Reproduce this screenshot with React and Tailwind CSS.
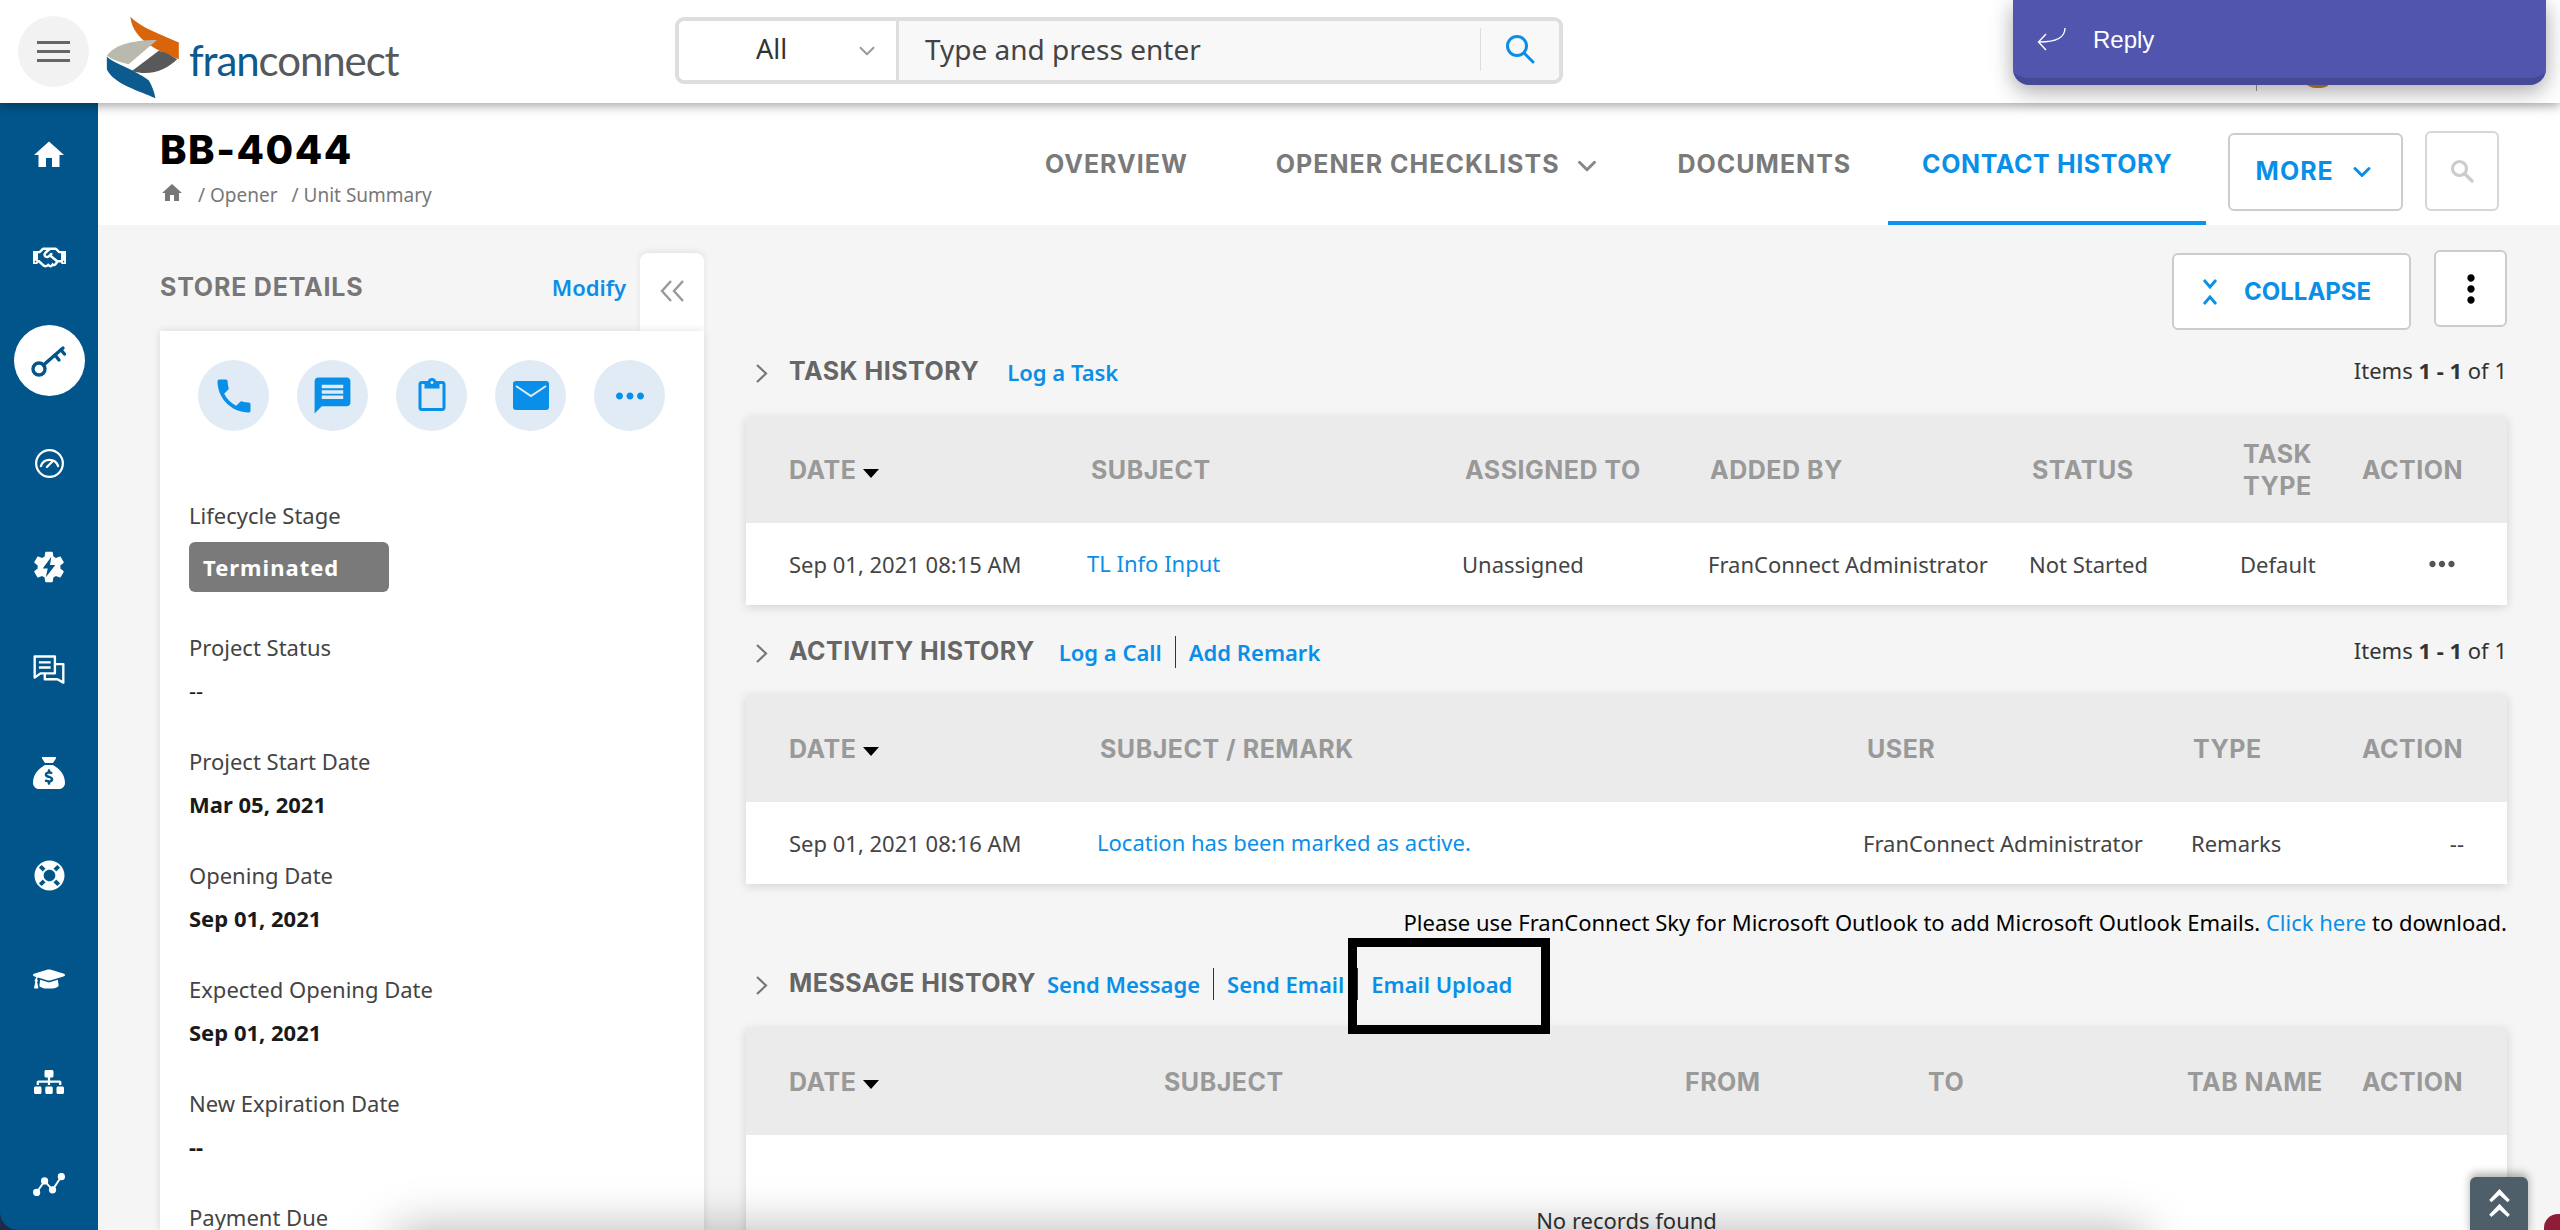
import React from "react";
import { ChevronDown } from "lucide-react";
import { MdHome, MdPhone, MdMessage, MdOutlineContentPaste, MdMoreHoriz, MdMoreVert } from "react-icons/md";
import { FaRegHandshake, FaLifeRing, FaGraduationCap, FaSitemap } from "react-icons/fa";
import { FaSackDollar } from "react-icons/fa6";

const BODY = "font-['Noto_Sans',sans-serif]";
const HEAD = "font-['Inter',sans-serif]";

function KeyIcon() {
  return (
    <svg width="36" height="32" viewBox="0 0 36 32" fill="none" stroke="#01558a" strokeWidth="3.4" strokeLinecap="round">
      <circle cx="8" cy="24" r="6" />
      <path d="M12.5 20L32 3" />
      <path d="M24 10l4 5M30 5l3.5 4" />
    </svg>
  );
}

function GaugeIcon() {
  return (
    <svg width="31" height="31" viewBox="0 0 36 36" fill="none" stroke="white" strokeWidth="2.6" strokeLinecap="round">
      <circle cx="18" cy="18" r="15.5" />
      <path d="M8 21a10.5 10.5 0 0 1 20 0" />
      <path d="M15 22l6-6" />
    </svg>
  );
}

function GearBoltIcon() {
  return (
    <svg width="38" height="38" viewBox="0 0 24 24">
      <path fill="white" d="M19.14 12.94c.04-.3.06-.61.06-.94 0-.32-.02-.64-.07-.94l2.03-1.58c.18-.14.23-.41.12-.61l-1.92-3.32c-.12-.22-.37-.29-.59-.22l-2.39.96c-.5-.38-1.03-.7-1.62-.94l-.36-2.54c-.04-.24-.24-.41-.48-.41h-3.84c-.24 0-.43.17-.47.41l-.36 2.54c-.59.24-1.13.57-1.62.94l-2.39-.96c-.22-.08-.47 0-.59.22L2.74 8.87c-.12.21-.08.47.12.61l2.03 1.58c-.05.3-.09.63-.09.94s.02.64.07.94l-2.03 1.58c-.18.14-.23.41-.12.61l1.92 3.32c.12.22.37.29.59.22l2.39-.96c.5.38 1.03.7 1.62.94l.36 2.54c.05.24.24.41.48.41h3.84c.24 0 .44-.17.47-.41l.36-2.54c.59-.24 1.13-.56 1.62-.94l2.39.96c.22.08.47 0 .59-.22l1.92-3.32c.12-.22.07-.47-.12-.61l-2.01-1.58z" />
      <path fill="#01558a" d="M13.5 5.5L8 13h3.2l-1.2 5.5L16 10.8h-3.4z" />
    </svg>
  );
}

function ChatIcon() {
  return (
    <svg width="32" height="32" viewBox="0 0 38 36" fill="none" stroke="white" strokeWidth="2.8" strokeLinejoin="round">
      <path d="M2 2h24v20H9l-7 5z" />
      <path d="M7 9h14M7 15h14" />
      <path d="M26 11h10v22l-7-4H14v-7" />
    </svg>
  );
}

function ChartIcon() {
  return (
    <svg width="32" height="23" viewBox="0 0 36 26" fill="white" stroke="white" strokeWidth="2.2">
      <path fill="none" d="M4 22L13 9l9 10L32 4" />
      <circle cx="4" cy="22" r="3" />
      <circle cx="13" cy="9" r="3" />
      <circle cx="22" cy="19" r="3" />
      <circle cx="32" cy="4" r="3" />
    </svg>
  );
}

function MailIcon() {
  return (
    <svg width="36" height="29" viewBox="0 0 36 29">
      <rect width="36" height="29" rx="3" fill="#0a8fe8" />
      <path d="M3 5l15 10L33 5" fill="none" stroke="#e1ebf6" strokeWidth="2" />
    </svg>
  );
}

function Logo() {
  return (
    <svg width="74" height="83" viewBox="318 46 220 248" className="shrink-0">
      <path fill="#d9640a" d="M390 48C420 80 480 100 535 125V175C480 150 400 125 390 48Z" />
      <path fill="#b9b9ae" d="M320 165C340 135 390 118 470 118L385 190C360 185 340 178 320 165Z" />
      <path fill="#58595b" d="M395 210L475 150C495 155 515 165 530 175C500 205 450 228 395 210Z" />
      <path fill="#0d5a8f" d="M320 168C345 190 400 205 445 238C455 255 462 272 465 292C420 270 340 250 320 205Z" />
    </svg>
  );
}

function SideIcon({ children, active }) {
  return (
    <div className="h-[103px] flex items-center justify-center">
      <div className={`w-[71px] h-[71px] rounded-full flex items-center justify-center ${active ? "bg-white" : ""}`}>
        {children}
      </div>
    </div>
  );
}

function Sidebar() {
  return (
    <div className="w-[98px] shrink-0 bg-[#1e2a4a]">
      <aside className="h-full bg-[#01558a] rounded-bl-[18px]">
        <SideIcon><MdHome size={36} color="white" /></SideIcon>
        <SideIcon><FaRegHandshake size={33} color="white" /></SideIcon>
        <SideIcon active><KeyIcon /></SideIcon>
        <SideIcon><GaugeIcon /></SideIcon>
        <SideIcon><GearBoltIcon /></SideIcon>
        <SideIcon><ChatIcon /></SideIcon>
        <SideIcon><FaSackDollar size={32} color="white" /></SideIcon>
        <SideIcon><FaLifeRing size={31} color="white" /></SideIcon>
        <SideIcon><FaGraduationCap size={32} color="white" /></SideIcon>
        <SideIcon><FaSitemap size={30} color="white" /></SideIcon>
        <SideIcon><ChartIcon /></SideIcon>
      </aside>
    </div>
  );
}

function TopBar() {
  return (
    <header className="relative z-20 h-[103px] bg-white flex items-center shadow-[0_3px_10px_rgba(0,0,0,0.35)] pl-[18px]">
      <div className="w-[71px] h-[71px] rounded-full bg-[#f2f2f2] flex flex-col items-center justify-center gap-[6px] shrink-0">
        <span className="block w-[33px] h-[3px] bg-[#666]" />
        <span className="block w-[33px] h-[3px] bg-[#666]" />
        <span className="block w-[33px] h-[3px] bg-[#666]" />
      </div>
      <div className="ml-[17px] mt-[11px]"><Logo /></div>
      <div className="ml-[9px] mt-[16px] w-[220px] font-['Lato',sans-serif] text-[42px] leading-none tracking-[-1.1px]">
        <span className="text-[#0d5a8f]">fran</span><span className="text-[#58595b]">connect</span>
      </div>

      <div className={`ml-[266px] -mt-[3px] w-[888px] h-[67px] rounded-[9px] border-[4px] border-[#dedede] flex ${BODY}`}>
        <div className="relative w-[220px] flex items-center justify-center pr-[32px] pb-[2px] bg-white rounded-l-[6px] border-r-[3px] border-[#dedede] text-[27px] text-[#333]">
          All
          <ChevronDown size={26} color="#999" strokeWidth={1.8} className="absolute right-[16px] top-[17px]" />
        </div>
        <div className="flex-1 flex items-center bg-[#f8f8f8] rounded-r-[6px] pl-[26px] pb-[2px] text-[28px] text-[#444]">
          Type and press enter
          <div className="ml-auto flex items-center h-[43px] border-l border-[#ddd] pl-[24px] pr-[24px]">
            <svg width="30" height="30" viewBox="0 0 30 30" fill="none" stroke="#0a8fe8" strokeWidth="3" strokeLinecap="round">
              <circle cx="12" cy="12" r="9.5" />
              <path d="M19 19l9 9" />
            </svg>
          </div>
        </div>
      </div>

      {/* leftovers of the page behind the reply popup */}
      <span className="absolute left-[2256px] top-[82px] h-[9px] w-px bg-[#999]" />
      <span className="absolute left-[2302px] top-[60px] w-[32px] h-[28px] rounded-full bg-[#c8821e]" />

      <div className="absolute left-[2013px] top-0 w-[533px] h-[85px] bg-[#5155ae] border-b-[7px] border-[#464a96] rounded-b-[16px] shadow-[0_6px_22px_rgba(0,0,0,0.35)] flex items-center pl-[24px] pt-[1px]">
        <svg width="30" height="26" viewBox="0 0 30 26" fill="none" stroke="white" strokeWidth="1.4">
          <path d="M28 1c0 9-7 14-26 14" />
          <path d="M9 7l-7.5 8L9 23" />
        </svg>
        <span className="ml-[26px] font-['Liberation_Sans',sans-serif] text-[24px] text-white">Reply</span>
      </div>
    </header>
  );
}

function Tab({ children, active }) {
  return (
    <span className={`${HEAD} text-[25px] font-bold whitespace-nowrap ${active ? "tracking-[0.6px] text-[#0a8fe8]" : "tracking-[1px] text-[#7a7a7a]"}`}>
      {children}
    </span>
  );
}

function SubHeader() {
  return (
    <div className="h-[122px] bg-white flex shrink-0 pl-[62px]">
      <div className="w-[885px] shrink-0 pt-[24px]">
        <h1 className={`${HEAD} text-[40px] leading-[46px] font-extrabold tracking-[1.5px] text-black`}>BB-4044</h1>
        <div className={`${BODY} mt-[8px] flex items-center gap-[14px] text-[19px] text-[#777]`}>
          <MdHome size={24} color="#777" className="-mt-[4px]" />
          <span>/ Opener</span>
          <span>/ Unit Summary</span>
        </div>
      </div>
      <div className="flex items-center pt-[2px]">
        <Tab>OVERVIEW</Tab>
        <span className="ml-[88px]"><Tab>OPENER CHECKLISTS</Tab></span>
        <ChevronDown size={30} color="#888" strokeWidth={2.4} className="ml-[12px] mt-[2px]" />
        <span className="ml-[76px]"><Tab>DOCUMENTS</Tab></span>
        <div className="ml-[37px] w-[318px] h-full flex items-center justify-center border-b-[4px] border-[#0b93ef] pt-[3px]">
          <Tab active>CONTACT HISTORY</Tab>
        </div>
      </div>
      <div className="ml-[22px] mt-[30px] w-[175px] h-[78px] rounded-[6px] border-2 border-[#ccc] bg-white flex items-center justify-center gap-[14px]">
        <span className={`${HEAD} text-[25px] font-bold tracking-[1px] text-[#0a8fe8]`}>MORE</span>
        <ChevronDown size={28} color="#0a8fe8" strokeWidth={2.6} />
      </div>
      <div className="ml-[22px] mt-[28px] w-[74px] h-[80px] rounded-[6px] border-2 border-[#d6d6d6] bg-white flex items-center justify-center">
        <svg width="24" height="24" viewBox="0 0 24 24" fill="none" stroke="#ccc" strokeWidth="3.2" strokeLinecap="round">
          <circle cx="9.5" cy="9.5" r="7" />
          <path d="M15 15l7 7" />
        </svg>
      </div>
    </div>
  );
}

function RoundBtn({ children }) {
  return (
    <div className="w-[71px] h-[71px] rounded-full bg-[#e1ebf6] flex items-center justify-center">
      {children}
    </div>
  );
}

function Field({ label, value, bold = true }) {
  return (
    <div className="mb-[41px]">
      <div className="text-[22px] leading-[30px] text-[#444]">{label}</div>
      {value && (
        <div className={`mt-[13px] text-[22px] leading-[30px] text-[#1a1a1a] ${bold ? "font-bold" : ""}`}>{value}</div>
      )}
    </div>
  );
}

function StoreDetails() {
  return (
    <div className="w-[606px] shrink-0 pl-[62px] pt-[28px] flex flex-col">
      <div className="h-[78px] flex items-start shrink-0">
        <span className={`${HEAD} mt-[19px] text-[25px] leading-[30px] font-bold tracking-[0.8px] text-[#777]`}>STORE DETAILS</span>
        <span className={`${BODY} ml-auto mt-[19px] text-[22px] leading-[30px] font-semibold text-[#0a8fe8]`}>Modify</span>
        <div className="ml-[14px] w-[64px] h-[78px] bg-white rounded-t-[8px] shadow-[0_-2px_6px_rgba(0,0,0,0.08)] flex items-center justify-center pb-[2px]">
          <svg width="26" height="24" viewBox="0 0 26 24" fill="none" stroke="#999" strokeWidth="2.4">
            <path d="M12 2L3 12l9 10M24 2l-9 10 9 10" />
          </svg>
        </div>
      </div>
      <div className={`${BODY} flex-1 bg-white shadow-[0_0_8px_rgba(0,0,0,0.12)] pt-[29px] pl-[29px] overflow-hidden`}>
        <div className="flex gap-[28px] pl-[9px]">
          <RoundBtn><MdPhone size={44} color="#0a8fe8" /></RoundBtn>
          <RoundBtn><MdMessage size={43} color="#0a8fe8" /></RoundBtn>
          <RoundBtn><MdOutlineContentPaste size={36} color="#0a8fe8" /></RoundBtn>
          <RoundBtn><MailIcon /></RoundBtn>
          <RoundBtn><MdMoreHoriz size={42} color="#0a8fe8" /></RoundBtn>
        </div>
        <div className="mt-[69px] text-[22px] leading-[30px] text-[#444]">Lifecycle Stage</div>
        <div className="mt-[12px] mb-[40px] w-[200px] h-[50px] rounded-[6px] bg-[#7a7a7a] flex items-center pl-[14px] text-[22px] font-bold tracking-[1px] text-white">
          Terminated
        </div>
        <Field label="Project Status" value="--" bold={false} />
        <Field label="Project Start Date" value="Mar 05, 2021" />
        <Field label="Opening Date" value="Sep 01, 2021" />
        <Field label="Expected Opening Date" value="Sep 01, 2021" />
        <Field label="New Expiration Date" value="--" />
        <Field label="Payment Due" />
      </div>
    </div>
  );
}

function HeadCell({ children, sort }) {
  return (
    <div className={`${HEAD} text-[25px] leading-[32px] font-bold tracking-[0.5px] text-[#999] flex items-center`}>
      {children}
      {sort && <span className="ml-[7px] mt-[6px] w-0 h-0 border-x-[8px] border-x-transparent border-t-[9px] border-t-black" />}
    </div>
  );
}

function Cell({ children, link, className = "" }) {
  return (
    <div className={`${BODY} text-[22px] leading-[30px] whitespace-nowrap ${link ? "text-[#0a8fe8]" : "text-[#444]"} ${className}`}>
      {children}
    </div>
  );
}

function SectionHead({ title, links, items }) {
  return (
    <div className="h-[40px] flex items-center">
      <svg width="13" height="19" viewBox="0 0 13 19" fill="none" stroke="#777" strokeWidth="2.2" className="ml-[9px] mr-[21px] mt-[3px]">
        <path d="M2 1l9 8.5L2 18" />
      </svg>
      <span className={`${HEAD} text-[25px] font-bold tracking-[0.5px] text-[#666] whitespace-nowrap`}>{title}</span>
      <div className={`${BODY} flex items-center text-[22px] font-semibold text-[#0a8fe8]`}>{links}</div>
      {items && (
        <span className={`${BODY} ml-auto -mt-[3px] text-[22px] text-[#333]`}>
          Items <b>1 - 1</b> of 1
        </span>
      )}
    </div>
  );
}

const Sep = () => <span className="mx-[13px] h-[32px] w-px bg-[#333]" />;

function ContactHistory() {
  return (
    <div className="flex-1 pl-[42px] pr-[53px] pt-[25px]">
      <div className="h-[80px] flex items-start justify-end gap-[23px]">
        <div className="mt-[3px] w-[239px] h-[77px] rounded-[6px] border-2 border-[#ccc] bg-white flex items-center pl-[28px]">
          <svg width="16" height="28" viewBox="0 0 16 28" fill="none" stroke="#0a8fe8" strokeWidth="2.8">
            <path d="M2 2l6 7 6-7M2 26l6-7 6 7" />
          </svg>
          <span className={`${HEAD} ml-[26px] text-[24px] font-bold text-[#0a8fe8]`}>COLLAPSE</span>
        </div>
        <div className="w-[73px] h-[77px] rounded-[6px] border-2 border-[#ccc] bg-white flex items-center justify-center">
          <MdMoreVert size={44} color="black" />
        </div>
      </div>

      <div className="mt-[22px]">
        <SectionHead title="TASK HISTORY" items links={<span className="ml-[28px]">Log a Task</span>} />
      </div>
      <div className="mt-[25px] shadow-[0_2px_10px_rgba(0,0,0,0.14)]">
        <div className="h-[106px] bg-[#ebebeb] pl-[43px] grid grid-cols-[302px_374px_245px_322px_211px_119px_1fr] items-center">
          <HeadCell sort>DATE</HeadCell>
          <HeadCell>SUBJECT</HeadCell>
          <HeadCell>ASSIGNED TO</HeadCell>
          <HeadCell>ADDED BY</HeadCell>
          <HeadCell>STATUS</HeadCell>
          <HeadCell>TASK<br />TYPE</HeadCell>
          <HeadCell>ACTION</HeadCell>
        </div>
        <div className="h-[82px] bg-white pl-[43px] grid grid-cols-[302px_374px_245px_322px_211px_119px_1fr] items-center">
          <Cell>Sep 01, 2021 08:15 AM</Cell>
          <Cell link className="-ml-[4px] -mt-[3px]">TL Info Input</Cell>
          <Cell className="-ml-[3px]">Unassigned</Cell>
          <Cell className="-ml-[2px]">FranConnect Administrator</Cell>
          <Cell className="-ml-[3px]">Not Started</Cell>
          <Cell className="-ml-[3px]">Default</Cell>
          <MdMoreHoriz size={38} color="#555" className="ml-[61px]" />
        </div>
      </div>

      <div className="mt-[27px]">
        <SectionHead
          title="ACTIVITY HISTORY"
          items
          links={<><span className="ml-[24px]">Log a Call</span><Sep /><span>Add Remark</span></>}
        />
      </div>
      <div className="mt-[23px] shadow-[0_2px_10px_rgba(0,0,0,0.14)]">
        <div className="h-[107px] bg-[#ebebeb] pl-[43px] grid grid-cols-[311px_767px_326px_169px_1fr] items-center">
          <HeadCell sort>DATE</HeadCell>
          <HeadCell>SUBJECT / REMARK</HeadCell>
          <HeadCell>USER</HeadCell>
          <HeadCell>TYPE</HeadCell>
          <HeadCell>ACTION</HeadCell>
        </div>
        <div className="h-[82px] bg-white pl-[43px] grid grid-cols-[311px_767px_326px_169px_1fr] items-center">
          <Cell>Sep 01, 2021 08:16 AM</Cell>
          <Cell link className="-ml-[3px] -mt-[3px]">Location has been marked as active.</Cell>
          <Cell className="-ml-[4px]">FranConnect Administrator</Cell>
          <Cell className="-ml-[2px]">Remarks</Cell>
          <Cell className="text-right pr-[43px]">--</Cell>
        </div>
      </div>

      <div className={`${BODY} mt-[23px] text-right text-[22px] leading-[30px] text-black`}>
        Please use FranConnect Sky for Microsoft Outlook to add Microsoft Outlook Emails.{" "}
        <span className="text-[#0a8fe8]">Click here</span> to download.
      </div>

      <div className="mt-[27px]">
        <SectionHead
          title="MESSAGE HISTORY"
          links={<><span className="ml-[11px]">Send Message</span><Sep /><span>Send Email</span><Sep /><span>Email Upload</span></>}
        />
      </div>
      <div className="mt-[24px] h-[300px] bg-white shadow-[0_2px_10px_rgba(0,0,0,0.14)]">
        <div className="h-[107px] bg-[#ebebeb] pl-[43px] grid grid-cols-[375px_521px_243px_259px_175px_1fr] items-center">
          <HeadCell sort>DATE</HeadCell>
          <HeadCell>SUBJECT</HeadCell>
          <HeadCell>FROM</HeadCell>
          <HeadCell>TO</HeadCell>
          <HeadCell>TAB NAME</HeadCell>
          <HeadCell>ACTION</HeadCell>
        </div>
        <div className={`${BODY} pt-[70px] text-center text-[22px] leading-[30px] text-[#333]`}>No records found</div>
      </div>
    </div>
  );
}

export default function App() {
  return (
    <div className="relative w-[2560px] h-[1230px] overflow-hidden bg-[#f5f5f5]">
      <TopBar />
      <div className="flex h-[1127px]">
        <Sidebar />
        <div className="flex-1 flex flex-col min-w-0">
          <SubHeader />
          <div className="flex flex-1 min-h-0">
            <StoreDetails />
            <ContactHistory />
          </div>
        </div>
      </div>

      {/* annotation box around Email Upload */}
      <div className="absolute left-[1348px] top-[938px] w-[202px] h-[96px] border-[9px] border-black" />

      {/* scroll to top */}
      <div className="absolute left-[2470px] top-[1177px] w-[58px] h-[60px] rounded-t-[6px] bg-[#4f5f69] shadow-[0_-4px_8px_rgba(0,0,0,0.3)] flex justify-center pt-[12px]">
        <svg width="27" height="28" viewBox="0 0 28 38" fill="white">
          <path d="M14 0l14 15-3 3-11-10L3 18l-3-3zM14 20l14 15-3 3-11-10L3 38l-3-3z" />
        </svg>
      </div>

      {/* dock shadow along the bottom edge */}
      <div className="absolute left-[390px] top-[1230px] w-[1760px] h-[50px] rounded-[30px] bg-black/30 blur-[24px]" />

      {/* window corner */}
      <div className="absolute right-0 bottom-0 w-[16px] h-[16px] bg-[#8f1d3a] rounded-tl-[14px]" />
    </div>
  );
}
